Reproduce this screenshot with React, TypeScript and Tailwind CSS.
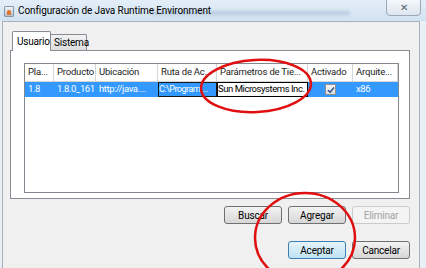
import React from "react";

const font = { fontFamily: 'Roboto, "Noto Sans", sans-serif' };

function Btn({ label, focus, disabled }: { label: string; focus?: boolean; disabled?: boolean }) {
  return (
    <div
      className={`w-[58px] h-[18px] flex items-center justify-center rounded-[3px] border text-[10px] tracking-[-0.2px] ${
        focus
          ? "border-[#3c7fb1] bg-gradient-to-b from-[#e5f4fc] to-[#bfe2f5] text-black"
          : disabled
          ? "border-[#cbcbcb] bg-[#f4f4f4] text-[#a3a3a3]"
          : "border-[#707070] bg-gradient-to-b from-[#f3f3f3] to-[#d6d6d6] text-black"
      }`}
    >
      {label}
    </div>
  );
}

const cols = [
  { h: "Pla...", w: "w-[29px]", v: "1.8" },
  { h: "Producto", w: "w-[42px]", v: "1.8.0_161" },
  { h: "Ubicación", w: "w-[62px]", v: "http://java...." },
  { h: "Ruta de Ac...", w: "w-[59px]", v: "C:\\Program ..." },
  { h: "Parámetros de Tie...", w: "w-[91px]", v: "Sun Microsystems Inc." },
  { h: "Activado", w: "w-[45px]", v: "" },
  { h: "Arquite...", w: "w-[45px]", v: "x86" },
];

export default function App() {
  return (
    <div className="relative w-[426px] h-[268px] overflow-hidden bg-[#e9eff6] text-[10px] tracking-[-0.2px]" style={font}>
      {/* Title bar */}
      <div className="relative h-[21px] bg-gradient-to-b from-[#e3eef8] to-[#d2e2f1] flex items-center">
        <div className="absolute left-[150px] top-[11px] w-[200px] h-[4px] rounded-full bg-[#b9cde2] blur-[1.5px]" />
        <div className="ml-[4px] w-[10px] h-[11px] mt-[2px] rounded-[1px] bg-gradient-to-b from-[#f4f4f4] to-[#b4c0ce] border border-[#8496aa] flex items-end justify-center">
          <div className="w-[4px] h-[5px] bg-[#e0742a] rounded-t-full mb-[1px]" />
        </div>
        <span className="relative ml-[4px] text-[10px] tracking-[-0.1px] text-black leading-none mt-[1px]">Configuración de Java Runtime Environment</span>
        <div className="absolute left-[386px] top-[-1px] w-[35px] h-[17px] rounded-b-[4px] border border-[#9aa8b8] bg-gradient-to-b from-[#f4f7fb] to-[#dde6f0] flex items-center justify-center text-[10px] text-[#55606c]">
          ✕
        </div>
      </div>
      {/* Client */}
      <div className="absolute left-[2px] w-[418px] top-[21px] bottom-0 bg-[#f0f0f0] border-l border-t border-r border-[#a7b0bb]">
        {/* Tabs */}
        <div className="flex items-end mt-[9px] ml-[9px] h-[19px]">
          <div className="relative z-10 h-[20px] w-[39px] flex items-center pl-[4px] bg-white border border-b-0 border-[#898c95] -mb-[1px] rounded-t-[2px]">
            Usuario
          </div>
          <div className="h-[16px] w-[36px] flex items-center pl-[3px] bg-gradient-to-b from-[#f2f2f2] to-[#dedede] border border-l-0 border-b-0 border-[#898c95] rounded-tr-[2px]">
            Sistema
          </div>
        </div>
        {/* Tab panel */}
        <div className="ml-[7px] w-[400px] h-[149px] bg-white border border-[#898c95] pt-[12px] pl-[13px]">
          <div className="w-[375px] h-[130px] border border-[#828790] bg-white text-[9.5px]">
            <div className="flex h-[18px] border-b border-[#d5d5d5]">
              {cols.map((c, i) => (
                <div key={i} className={`${c.w} shrink-0 border-r border-[#d5d5d5] text-[#222] flex items-center pl-[3px] whitespace-nowrap overflow-hidden bg-white`}>
                  {c.h}
                </div>
              ))}
            </div>
            <div className="flex h-[15px] bg-[#3399ff] tracking-[-0.4px]">
              {cols.map((c, i) => {
                if (i === 3)
                  return (
                    <div key={i} className={`${c.w} shrink-0 border border-[#1a1a1a] text-white flex items-center whitespace-nowrap overflow-hidden text-[9px] tracking-[-0.5px]`}>
                      {c.v}
                    </div>
                  );
                if (i === 4)
                  return (
                    <div key={i} className={`${c.w} shrink-0 border border-black bg-white text-black flex items-center whitespace-nowrap overflow-hidden tracking-[-0.45px]`}>
                      {c.v}
                    </div>
                  );
                if (i === 5)
                  return (
                    <div key={i} className={`${c.w} shrink-0 flex items-center justify-center`}>
                      <div className="w-[11px] h-[11px] border border-[#8f8f8f] bg-gradient-to-b from-[#f6f6f6] to-[#dadada] flex items-center justify-center">
                        <svg width="8" height="8" viewBox="0 0 8 8">
                          <path d="M1 4.2 L3.1 6.3 L7 1.5" fill="none" stroke="#2b4f8c" strokeWidth="1.4" />
                        </svg>
                      </div>
                    </div>
                  );
                return (
                  <div key={i} className={`${c.w} shrink-0 text-white flex items-center pl-[3px] whitespace-nowrap overflow-hidden`}>
                    {c.v}
                  </div>
                );
              })}
            </div>
          </div>
        </div>
        {/* Tab buttons */}
        <div className="flex justify-end gap-[6px] mt-[7px] w-[407px]">
          <Btn label="Buscar" />
          <Btn label="Agregar" />
          <Btn label="Eliminar" disabled />
        </div>
        {/* Bottom buttons */}
        <div className="flex justify-end gap-[6px] mt-[17px] w-[407px]">
          <Btn label="Aceptar" focus />
          <Btn label="Cancelar" />
        </div>
      </div>
      {/* Red annotation ellipses */}
      <svg className="absolute left-0 top-0 pointer-events-none" width="426" height="268">
        <ellipse cx="256" cy="86" rx="55" ry="26" fill="none" stroke="#e01010" strokeWidth="2.5" transform="rotate(-3 256 86)" />
        <ellipse cx="305" cy="238" rx="50" ry="45" fill="none" stroke="#e01010" strokeWidth="2.5" />
      </svg>
    </div>
  );
}
